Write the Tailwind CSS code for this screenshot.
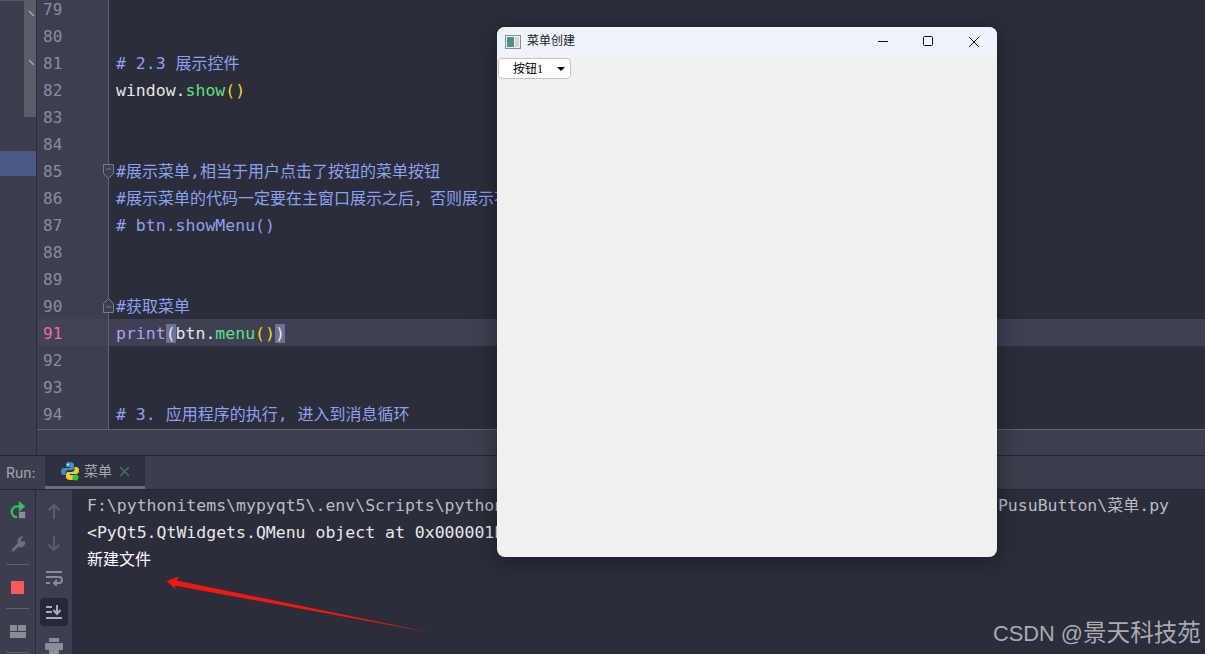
<!DOCTYPE html>
<html lang="en">
<head>
    <meta charset="UTF-8">
    <title>菜单创建</title>
    <script src="https://cdn.jsdelivr.net/npm/@tailwindcss/browser@4"></script>
</head>
<body class="bg-[#2b2d3a]">
<div class="relative h-[654px] w-[1205px] overflow-hidden flex flex-col font-['DejaVu_Sans_Mono','Noto_Sans_CJK_SC',monospace] text-[16.5px]">

    <!-- Editor -->
    <div class="flex h-[456px] border-b border-[#25262f]">
        <!-- Project strip -->
        <div class="relative w-[37px] shrink-0 bg-[#3c3e4d] border-r border-[#2a2c37] border-t border-t-[#5f5a45]">
            <div class="ml-[24px] w-[12px] h-[116px] bg-[#5a5c68]"></div>
            <div class="mt-[34px] h-[25px] bg-[#4b5a84]"></div>
            <svg class="absolute left-[28px] top-[8px]" width="8" height="60" fill="none" stroke="#a9abb5" stroke-width="1.2"><path d="M1 2l5 5M1 51l5 5"/></svg>
        </div>

        <div class="flex-1 flex flex-col">
            <div class="h-[430px] flex flex-col overflow-hidden border-b border-[#5e6070]">
                <div class="flex h-[22px]"><div class="w-[72px] h-full bg-[#3d3f50] border-r border-[#5d6080] pl-[6px] text-[#8a8d9c] text-[16px] leading-[19px] shrink-0">79</div></div>
                <div class="flex h-[27px]"><div class="w-[72px] bg-[#3d3f50] border-r border-[#5d6080] pl-[6px] text-[#8a8d9c] text-[16px] leading-[29px] shrink-0">80</div></div>
                <div class="flex h-[27px]"><div class="w-[72px] bg-[#3d3f50] border-r border-[#5d6080] pl-[6px] text-[#8a8d9c] text-[16px] leading-[29px] shrink-0">81</div><div class="pl-[7px] leading-[29px] whitespace-pre text-[#8aa2f0]"># 2.3 <span class="text-[16px]">展示控件</span></div></div>
                <div class="flex h-[27px]"><div class="w-[72px] bg-[#3d3f50] border-r border-[#5d6080] pl-[6px] text-[#8a8d9c] text-[16px] leading-[29px] shrink-0">82</div><div class="pl-[7px] leading-[29px] whitespace-pre text-[#e8e8e8]">window.<span class="text-[#5fe07f]">show</span><span class="text-[#f5d90a]">()</span></div></div>
                <div class="flex h-[27px]"><div class="w-[72px] bg-[#3d3f50] border-r border-[#5d6080] pl-[6px] text-[#8a8d9c] text-[16px] leading-[29px] shrink-0">83</div></div>
                <div class="flex h-[27px]"><div class="w-[72px] bg-[#3d3f50] border-r border-[#5d6080] pl-[6px] text-[#8a8d9c] text-[16px] leading-[29px] shrink-0">84</div></div>
                <div class="relative flex h-[27px]"><div class="w-[72px] bg-[#3d3f50] border-r border-[#5d6080] pl-[6px] text-[#8a8d9c] text-[16px] leading-[29px] shrink-0">85</div><div class="pl-[7px] leading-[29px] whitespace-pre text-[#8aa2f0]">#<span class="text-[16px]">展示菜单</span>,<span class="text-[16px]">相当于用户点击了按钮的菜单按钮</span></div>
                    <svg class="absolute left-[66px] top-[7px]" width="12" height="16" fill="#3d3f50" stroke="#7a7c8c"><path d="M.5.5h10v9l-5 5-5-5zM3 5h5"/></svg>
                </div>
                <div class="flex h-[27px]"><div class="w-[72px] bg-[#3d3f50] border-r border-[#5d6080] pl-[6px] text-[#8a8d9c] text-[16px] leading-[29px] shrink-0">86</div><div class="pl-[7px] leading-[29px] whitespace-pre text-[#8aa2f0]">#<span class="text-[16px]">展示菜单的代码一定要在主窗口展示之后，否则展示不出来</span></div></div>
                <div class="flex h-[27px]"><div class="w-[72px] bg-[#3d3f50] border-r border-[#5d6080] pl-[6px] text-[#8a8d9c] text-[16px] leading-[29px] shrink-0">87</div><div class="pl-[7px] leading-[29px] whitespace-pre text-[#8aa2f0]"># btn.showMenu()</div></div>
                <div class="flex h-[27px]"><div class="w-[72px] bg-[#3d3f50] border-r border-[#5d6080] pl-[6px] text-[#8a8d9c] text-[16px] leading-[29px] shrink-0">88</div></div>
                <div class="flex h-[27px]"><div class="w-[72px] bg-[#3d3f50] border-r border-[#5d6080] pl-[6px] text-[#8a8d9c] text-[16px] leading-[29px] shrink-0">89</div></div>
                <div class="relative flex h-[27px]"><div class="w-[72px] bg-[#3d3f50] border-r border-[#5d6080] pl-[6px] text-[#8a8d9c] text-[16px] leading-[29px] shrink-0">90</div><div class="pl-[7px] leading-[29px] whitespace-pre text-[#8aa2f0]">#<span class="text-[16px]">获取菜单</span></div>
                    <svg class="absolute left-[66px] top-[6px]" width="12" height="16" fill="#3d3f50" stroke="#7a7c8c"><path d="M5.5.5l5 5v9h-10v-9zM3 9h5"/></svg>
                </div>
                <div class="flex h-[27px] bg-[#3e4154]"><div class="w-[72px] bg-[#424456] border-r border-[#5d6080] pl-[6px] text-[#f06ba0] text-[16px] leading-[29px] shrink-0">91</div><div class="pl-[7px] leading-[27px] whitespace-pre text-[#e8e8e8]"><span class="relative top-px"><span class="text-[#b99bf0]">print</span><span class="bg-[#6c7196]">(</span>btn.<span class="text-[#5fe07f]">menu</span><span class="text-[#f5d90a]">()</span><span class="bg-[#6c7196]">)</span></span></div></div>
                <div class="flex h-[27px]"><div class="w-[72px] bg-[#3d3f50] border-r border-[#5d6080] pl-[6px] text-[#8a8d9c] text-[16px] leading-[29px] shrink-0">92</div></div>
                <div class="flex h-[27px]"><div class="w-[72px] bg-[#3d3f50] border-r border-[#5d6080] pl-[6px] text-[#8a8d9c] text-[16px] leading-[29px] shrink-0">93</div></div>
                <div class="flex h-[27px]"><div class="w-[72px] bg-[#3d3f50] border-r border-[#5d6080] pl-[6px] text-[#8a8d9c] text-[16px] leading-[29px] shrink-0">94</div><div class="pl-[7px] leading-[29px] whitespace-pre text-[#8aa2f0]"># 3. <span class="text-[16px]">应用程序的执行</span>, <span class="text-[16px]">进入到消息循环</span></div></div>
                <div class="flex-1 flex"><div class="w-[72px] bg-[#3d3f50] border-r border-[#5d6080]"></div></div>
            </div>
            <!-- Horizontal scroll area -->
            <div class="flex-1 bg-[#3d3f50]"></div>
        </div>
    </div>

    <!-- Run tab bar -->
    <div class="flex h-[34px] bg-[#3c3e4d] border-b border-[#25262f]">
        <div class="w-[45px] pl-[6px] pt-[6px] text-[#a4a7b2] text-[14px] font-['Inter',sans-serif]">Run:</div>
        <div class="flex items-center w-[100px] h-full bg-[#2f3140] border-b-[3px] border-[#6b6e7d] pl-[15px] gap-[4px]">
            <svg width="20" height="20" viewBox="0 0 20 20">
                <path fill="#3d8fc4" d="M9.8 1C6 1 6 2.600 6 4v2h4.200v1H3.800C2 7 1 8.500 1 10.500S2 14 3.800 14H5.500v-2.200C5.500 10 7 9 8.500 9h3.400C13.200 9 14 8 14 6.800V4c0-1.800-1.800-3-4.200-3z"/>
                <path fill="#f2c92f" d="M10.200 19c3.800 0 3.800-1.600 3.800-3v-2H9.800v-1h6.400c1.800 0 2.800-1.500 2.800-3.500S18 6 16.200 6H14.500v2.200C14.500 10 13 11 11.500 11H8.100C6.800 11 6 12 6 13.200V16c0 1.800 1.800 3 4.200 3z"/>
                <circle cx="8" cy="3.500" r="1" fill="#e6eef5"/>
                <circle cx="15.500" cy="16.500" r="3" fill="#1fd12f"/>
            </svg>
            <span class="text-[#a4a7b2] text-[14px]">菜单</span>
            <svg class="ml-[3px]" width="11" height="11" fill="none" stroke="#3b7a64" stroke-width="1.200"><path d="M1 1l9 9M10 1l-9 9"/></svg>
        </div>
    </div>

    <!-- Run panel -->
    <div class="flex-1 flex overflow-hidden">
        <div class="w-[36px] shrink-0 bg-[#3c3e4d] border-r border-[#2a2c37] flex flex-col items-center pt-[10px]">
            <svg width="18" height="20" viewBox="0 0 20 22" fill="none"><path d="M15 7H9a6 6 0 1 0 0 12" stroke="#2fc25f" stroke-width="2.500"/><path d="M11 1l7 6-7 6z" fill="#2fc25f"/><rect x="11" y="13" width="7" height="7" fill="#8a8c96"/></svg>
            <svg class="mt-[15px] shrink-0" width="18" height="18" viewBox="0 0 18 20" fill="#6d707c"><path d="M2 16l7-7a5 5 0 0 1 6-7l-3 3 1.500 2.500 3-1a5 5 0 0 1-7 6.500l-6 6z"/></svg>
            <div class="w-[23px] h-px shrink-0 bg-[#5e6070] mt-[11px]"></div>
            <div class="w-[13px] h-[13px] shrink-0 bg-[#f85a5a] mt-[16px]"></div>
            <div class="w-[23px] h-px shrink-0 bg-[#5e6070] mt-[14px]"></div>
            <svg class="mt-[16px] shrink-0" width="16" height="14" fill="#8a8c96"><rect x="0" y="0" width="7" height="6"/><rect x="8" y="0" width="8" height="6"/><rect x="0" y="7" width="16" height="6"/></svg>
            <div class="w-[23px] h-px shrink-0 bg-[#5e6070] mt-[13px]"></div>
        </div>
        <div class="w-[36px] shrink-0 bg-[#3d3f50] flex flex-col items-center pt-[13px]">
            <svg class="shrink-0" width="14" height="16" fill="none" stroke="#5b5e6a" stroke-width="2"><path d="M7 16V2M1.500 7.500L7 2l5.500 5.500"/></svg>
            <svg class="mt-[17px] shrink-0" width="14" height="16" fill="none" stroke="#5b5e6a" stroke-width="2"><path d="M7 0v14M1.500 8.500L7 14l5.500-5.500"/></svg>
            <svg class="mt-[18px] shrink-0" width="17" height="16" fill="none" stroke="#8a8c96" stroke-width="2"><path d="M0 2h16M0 7h13a3 3 0 0 1 0 6H8M11 10l-3 3 3 3M0 13h4"/></svg>
            <div class="mt-[12px] w-[28px] h-[28px] shrink-0 rounded-[4px] bg-[#27293a] flex items-center justify-center">
                <svg width="16" height="15" fill="none" stroke="#a9abb5" stroke-width="2"><path d="M0 2h6M0 7h6M0 13h16M11 0v8M7.500 5l3.500 4 3.500-4"/></svg>
            </div>
            <svg class="mt-[12px] shrink-0" width="18" height="18" fill="#8a8c96"><rect x="4" y="0" width="10" height="4"/><rect x="0" y="5" width="18" height="7" rx="1"/><rect x="4" y="10" width="10" height="8"/></svg>
        </div>
        <div class="flex-1 pl-[15px] pt-[2px] leading-[27px]">
            <div class="whitespace-pre text-[#b9bcc6]">F:\pythonitems\mypyqt5\.env\Scripts\python.exe F:\pythonitems\mypyqt5\demo\QtWidgets\Button<span class="ml-[-3px]">\PusuButton\</span><span class="text-[16px]">菜单</span>.py</div>
            <div class="whitespace-pre text-[#e8e8e8]">&lt;PyQt5.QtWidgets.QMenu object at 0x000001E3A5C0B8B0&gt;</div>
            <div class="whitespace-pre text-white text-[16px]">新建文件</div>
        </div>
    </div>

    <!-- App window floating over the IDE -->
    <div class="absolute left-[497px] top-[27px] w-[500px] h-[530px] rounded-[8px] overflow-hidden bg-[#f0f0f0] shadow-[0_4px_24px_rgba(0,0,0,0.4)] flex flex-col font-['Liberation_Sans','Noto_Sans_CJK_SC',sans-serif] text-black">
        <div class="h-[30px] shrink-0 bg-[#eef3fa] flex items-center pl-[8px] pb-[1px]">
            <svg width="16" height="14" viewBox="0 0 16 14"><rect x=".5" y=".5" width="15" height="13" fill="#eef0f2" stroke="#8a9096"/><rect x="2" y="2" width="7" height="10" fill="#4f8f8a"/><rect x="10" y="2" width="4" height="10" fill="#cfd5d8"/></svg>
            <span class="ml-[6px] mb-[2px] text-[12px] text-[#222]">菜单创建</span>
            <svg class="ml-auto" width="11" height="11" stroke="#111" fill="none"><path d="M0 5.500h10"/></svg>
            <svg class="ml-[34px]" width="11" height="11" stroke="#111" fill="none"><rect x=".5" y=".5" width="9" height="9" rx="1"/></svg>
            <svg class="ml-[34px] mr-[17px]" width="12" height="12" stroke="#111" fill="none"><path d="M1 1l10 10M11 1L1 11"/></svg>
        </div>
        <div class="ml-[1px] mt-[1px] w-[73px] h-[21px] bg-white border border-[#c4c4c4] rounded-[4px] flex items-center pl-[14px] pt-[1px] text-[12px]">
            <span>按钮<span class="font-['Liberation_Serif',serif]">1</span></span>
            <svg class="ml-auto mr-[5px]" width="8" height="4" fill="#000"><path d="M0 0h8L4 4z"/></svg>
        </div>
    </div>

    <!-- Annotation arrow -->
    <svg class="absolute left-0 top-0 pointer-events-none" width="1205" height="654"><polygon fill="#f5170f" points="166.500,581 179,576.500 176.500,580.500 433,633 174.500,585.500 176,589.500"/></svg>

    <!-- Watermark -->
    <div class="absolute left-[993px] top-[616px] text-[21.8px] text-[#aaabaf] whitespace-pre font-['Liberation_Sans','Noto_Sans_CJK_SC',sans-serif]">CSDN @<span class="text-[23.6px]">景天科技苑</span></div>
</div>
</body>
</html>
